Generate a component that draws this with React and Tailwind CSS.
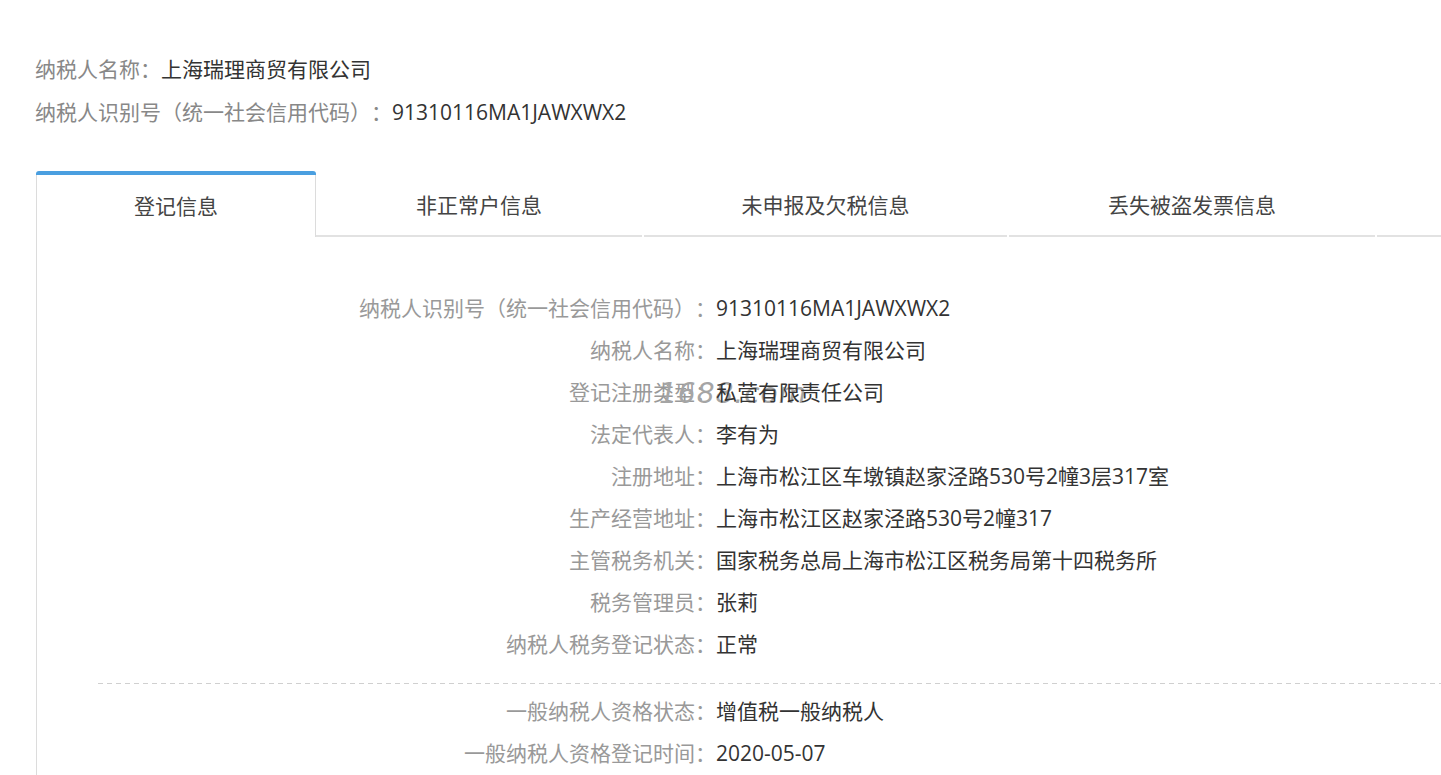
import React from "react";

const rows1 = [
  ["纳税人识别号（统一社会信用代码）：", "91310116MA1JAWXWX2"],
  ["纳税人名称：", "上海瑞理商贸有限公司"],
  ["登记注册类型：", "私营有限责任公司", true],
  ["法定代表人：", "李有为"],
  ["注册地址：", "上海市松江区车墩镇赵家泾路530号2幢3层317室"],
  ["生产经营地址：", "上海市松江区赵家泾路530号2幢317"],
  ["主管税务机关：", "国家税务总局上海市松江区税务局第十四税务所"],
  ["税务管理员：", "张莉"],
  ["纳税人税务登记状态：", "正常"],
];

const rows2 = [
  ["一般纳税人资格状态：", "增值税一般纳税人"],
  ["一般纳税人资格登记时间：", "2020-05-07"],
];

function Row({ label, value, mark }) {
  return (
    <div className="relative flex h-[42px] items-center">
      <div className="w-[679px] shrink-0 text-right text-[#999]">{label}</div>
      {mark && (
        <div className="pointer-events-none absolute left-[622px] top-[8px] whitespace-nowrap text-[28px] leading-[28px] italic tracking-[1px] text-[#a5a5a5] [font-family:'DejaVu_Sans',sans-serif]">
          1688.com
        </div>
      )}
      <div className="relative whitespace-nowrap text-[#333]">{value}</div>
    </div>
  );
}

export default function App() {
  return (
    <div className="min-h-[775px] overflow-hidden bg-white text-[21px] [text-spacing-trim:space-all] [font-family:'Open_Sans','Noto_Sans_CJK_SC',sans-serif]">
      <div className="pl-[35px] pt-[48px]">
        <div className="flex h-[43px] items-center whitespace-nowrap">
          <span className="text-[#888]">纳税人名称：</span>
          <span className="text-[#333]">上海瑞理商贸有限公司</span>
        </div>
        <div className="flex h-[43px] items-center whitespace-nowrap">
          <span className="text-[#888]">纳税人识别号（统一社会信用代码）：</span>
          <span className="text-[#333]">91310116MA1JAWXWX2</span>
        </div>
      </div>

      <div className="ml-[36px] mt-[37px] flex w-[1500px] text-[#444]">
        <div className="flex h-[66px] w-[280px] shrink-0 flex-col">
          <div className="h-[4px] rounded-t-[3px] bg-[#4a9fe0]" />
          <div className="flex flex-1 items-center justify-center border-x border-[#dcdcdc] pt-[2px]">登记信息</div>
        </div>
        <div className="flex h-[66px] w-[326px] shrink-0 items-center justify-center border-b-2 border-[#e2e2e2] pt-[6px]">非正常户信息</div>
        <div className="ml-[2px] flex h-[66px] w-[363px] shrink-0 items-center justify-center border-b-2 border-[#e2e2e2] pt-[6px]">未申报及欠税信息</div>
        <div className="ml-[2px] flex h-[66px] w-[366px] shrink-0 items-center justify-center border-b-2 border-[#e2e2e2] pt-[6px]">丢失被盗发票信息</div>
        <div className="ml-[2px] h-[66px] flex-1 border-b-2 border-[#e2e2e2]" />
      </div>

      <div className="ml-[36px] w-[1500px] border-l border-[#dcdcdc] pt-[51px] pb-[40px]">
        {rows1.map(([l, v, m]) => (
          <Row key={l} label={l} value={v} mark={m} />
        ))}
        <div className="ml-[61px] mb-[7px] mt-[17px] h-px bg-[linear-gradient(to_right,#d0d0d0_5px,transparent_5px)] bg-[length:9px_1px]" />
        {rows2.map(([l, v]) => (
          <Row key={l} label={l} value={v} />
        ))}
      </div>
    </div>
  );
}
